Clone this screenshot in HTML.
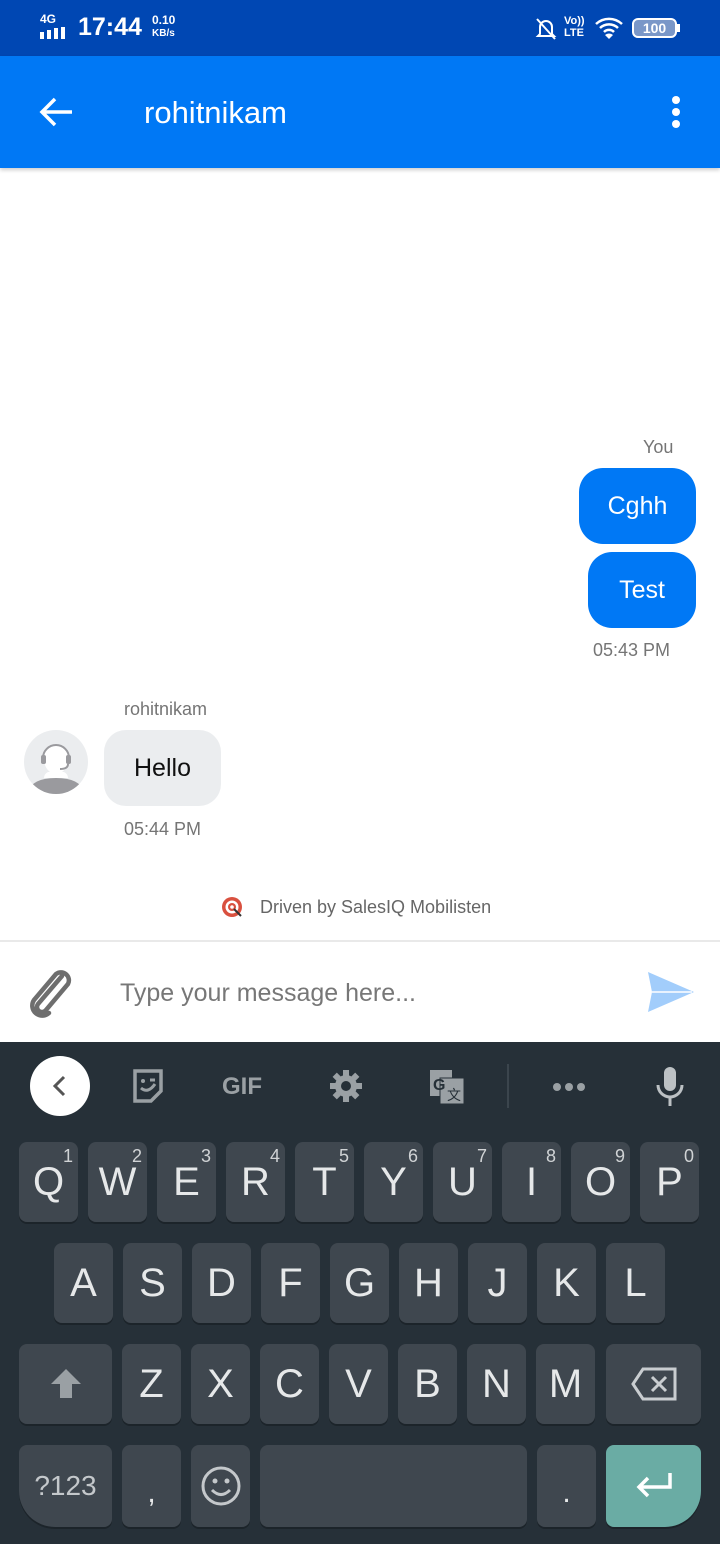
<!DOCTYPE html>
<html><head><meta charset="utf-8"><style>
*{margin:0;padding:0;box-sizing:border-box}
body{width:720px;height:1544px;position:relative;background:#fff;font-family:"Liberation Sans",sans-serif;overflow:hidden}
.abs{position:absolute}
.sb{left:0;top:0;width:720px;height:56px;background:#0047b3;color:#fff}
.hd{left:0;top:56px;width:720px;height:112px;background:#0078f5;color:#fff;box-shadow:0 2px 4px rgba(0,0,0,.2)}
.bub{background:#0078f5;color:#fff;font-size:25px;border-radius:24px;display:flex;align-items:center;justify-content:center}
.gray{color:#757575;font-size:18px}
.kb{left:0;top:1042px;width:720px;height:502px;background:#263038}
.k{position:absolute;width:59px;height:80px;background:#3f474f;border-radius:8px;color:#e6e8e9;font-size:40px;display:flex;align-items:center;justify-content:center;box-shadow:0 2px 0 #1c242a}
.k sup{position:absolute;top:4px;right:5px;font-size:18px;color:#d0d3d5}
</style></head><body>
<div class="abs sb">
 <div class="abs" style="left:40px;top:12px;font-size:12px;font-weight:bold">4G</div>
 <div class="abs" style="left:40px;top:27px;display:flex;gap:3px;align-items:flex-end">
  <div style="width:4px;height:7px;background:#fff"></div><div style="width:4px;height:9px;background:#fff"></div><div style="width:4px;height:11px;background:#fff"></div><div style="width:4px;height:12px;background:#fff"></div></div>
 <div class="abs" style="left:78px;top:13px;font-size:25px;font-weight:bold">17:44</div>
 <div class="abs" style="left:152px;top:14px;font-size:12px;font-weight:bold;line-height:12px">0.10<br><span style="font-size:10px">KB/s</span></div>
 <svg class="abs" style="left:534px;top:16px" width="24" height="26" viewBox="0 0 24 26"><path d="M6 18V11a6 6 0 0 1 12 0v7l2 2H4z" fill="none" stroke="#fff" stroke-width="2"/><path d="M3 3l18 20" stroke="#fff" stroke-width="2"/></svg>
 <div class="abs" style="left:564px;top:15px;font-size:11px;font-weight:bold;line-height:12px">Vo))<br>LTE</div>
 <svg class="abs" style="left:594px;top:16px" width="30" height="24" viewBox="0 0 30 24"><path d="M2 8a19 19 0 0 1 26 0M6 12a13 13 0 0 1 18 0M10 16a7 7 0 0 1 10 0" fill="none" stroke="#fff" stroke-width="2.5"/><path d="M15 23l-4-4a6 6 0 0 1 8 0z" fill="#fff"/></svg>
 <div class="abs" style="left:632px;top:18px;width:45px;height:20px;border:2px solid #fff;border-radius:6px;background:#7a97c8;font-size:14px;font-weight:bold;text-align:center;line-height:16px">100</div>
 <div class="abs" style="left:677px;top:24px;width:3px;height:8px;background:#fff"></div>
</div>
<div class="abs hd">
 <svg class="abs" style="left:38px;top:40px" width="36" height="32" viewBox="0 0 36 32"><path d="M34 16H4M17 3L4 16l13 13" fill="none" stroke="#fff" stroke-width="3.5"/></svg>
 <div class="abs" style="left:144px;top:39px;font-size:31px">rohitnikam</div>
 <div class="abs" style="left:672px;top:40px;width:8px;height:8px;border-radius:50%;background:#fff;box-shadow:0 12px 0 #fff,0 24px 0 #fff"></div>
</div>
<div class="abs gray" style="left:643px;top:437px">You</div>
<div class="abs bub" style="left:579px;top:468px;width:117px;height:76px">Cghh</div>
<div class="abs bub" style="left:588px;top:552px;width:108px;height:76px">Test</div>
<div class="abs gray" style="left:593px;top:640px">05:43 PM</div>
<div class="abs gray" style="left:124px;top:699px">rohitnikam</div>
<svg class="abs" style="left:24px;top:730px" width="64" height="64" viewBox="0 0 64 64"><defs><clipPath id="c"><circle cx="32" cy="32" r="32"/></clipPath></defs><circle cx="32" cy="32" r="32" fill="#ebedef"/><g clip-path="url(#c)"><path d="M4 62q4-14 28-14t28 14v4H4z" fill="#9a9a9e"/><path d="M20 48q0-4 4-6h16q4 2 4 6z" fill="#fff"/><ellipse cx="32" cy="29" rx="12" ry="15" fill="#fff"/><path d="M19 28a13 13 0 0 1 26 0" fill="none" stroke="#9a9a9e" stroke-width="2"/><rect x="17" y="25" width="5" height="9" rx="2" fill="#9a9a9e"/><rect x="42" y="25" width="5" height="9" rx="2" fill="#9a9a9e"/><path d="M44 34q0 5-8 5" fill="none" stroke="#9a9a9e" stroke-width="2"/></g></svg>
<div class="abs" style="left:104px;top:730px;width:117px;height:76px;background:#ebedef;border-radius:22px;font-size:25px;display:flex;align-items:center;justify-content:center;color:#111">Hello</div>
<div class="abs gray" style="left:124px;top:819px">05:44 PM</div>
<svg class="abs" style="left:221px;top:896px" width="24" height="24" viewBox="0 0 24 24"><circle cx="11" cy="11" r="10" fill="#d9503f"/><circle cx="11" cy="11" r="6.5" fill="#fff"/><circle cx="11" cy="11" r="4" fill="#d9503f"/><circle cx="11" cy="11" r="1.8" fill="#fff"/><path d="M13 13l7 7" stroke="#333" stroke-width="2"/></svg>
<div class="abs" style="left:260px;top:897px;font-size:18px;color:#666">Driven by SalesIQ Mobilisten</div>
<div class="abs" style="left:0;top:940px;width:720px;height:2px;background:#e9e9e9"></div>
<svg class="abs" style="left:26px;top:966px" width="50" height="52" viewBox="0 0 50 52"><path d="M36 10L12 38a5 5 0 0 0 8 6l22-26a8 8 0 0 0-12-10L8 34a10 10 0 0 0 15 13" fill="none" stroke="#6e6e6e" stroke-width="4.5" stroke-linecap="round"/></svg>
<div class="abs" style="left:120px;top:979px;font-size:25px;color:#777">Type your message here...</div>
<svg class="abs" style="left:647px;top:972px" width="48" height="40" viewBox="0 0 48 40"><path d="M1 0l46 20L1 40l4-20z" fill="#a2cdfb"/><path d="M5 20h40" stroke="#fff" stroke-width="1.5"/></svg>
<div class="abs kb">
 <div class="abs" style="left:30px;top:14px;width:60px;height:60px;border-radius:50%;background:#fff"></div>
 <svg class="abs" style="left:50px;top:32px" width="20" height="24" viewBox="0 0 20 24"><path d="M14 3L5 12l9 9" fill="none" stroke="#555" stroke-width="3"/></svg>
 <svg class="abs" style="left:130px;top:26px" width="36" height="36" viewBox="0 0 36 36"><path d="M5 3h26v20l-10 10H5z" fill="none" stroke="#9aa0a4" stroke-width="3.5"/><path d="M11 20q7 6 14-4" fill="none" stroke="#9aa0a4" stroke-width="3"/><circle cx="13" cy="13" r="2" fill="#9aa0a4"/><path d="M20 12h5" stroke="#9aa0a4" stroke-width="3"/></svg>
 <div class="abs" style="left:222px;top:31px;font-size:24px;font-weight:bold;color:#9aa0a4">GIF</div>
 <svg class="abs" style="left:328px;top:26px" width="36" height="36" viewBox="0 0 36 36"><circle cx="18" cy="18" r="11" fill="#9aa0a4"/><g stroke="#9aa0a4" stroke-width="6"><path d="M18 2v32M2 18h32M6.7 6.7l22.6 22.6M29.3 6.7L6.7 29.3"/></g><circle cx="18" cy="18" r="5" fill="#263038"/></svg>
 <svg class="abs" style="left:428px;top:26px" width="38" height="38" viewBox="0 0 38 38"><rect x="2" y="2" width="22" height="26" fill="#9aa0a4"/><rect x="12" y="10" width="24" height="26" fill="#9aa0a4" stroke="#263038" stroke-width="1"/><text x="5" y="22" font-size="16" font-weight="bold" fill="#263038" font-family="Liberation Sans">G</text><text x="19" y="32" font-size="14" fill="#263038" font-family="Noto Sans CJK SC, sans-serif">文</text></svg>
 <div class="abs" style="left:507px;top:22px;width:2px;height:44px;background:#3b454d"></div>
 <div class="abs" style="left:553px;top:41px;display:flex;gap:4px"><i style="width:8px;height:8px;border-radius:50%;background:#9aa0a4"></i><i style="width:8px;height:8px;border-radius:50%;background:#9aa0a4"></i><i style="width:8px;height:8px;border-radius:50%;background:#9aa0a4"></i></div>
 <svg class="abs" style="left:654px;top:24px" width="32" height="40" viewBox="0 0 32 40"><rect x="10" y="1" width="12" height="24" rx="6" fill="#bcc1c4"/><path d="M4 19a12 12 0 0 0 24 0M16 31v9" fill="none" stroke="#bcc1c4" stroke-width="3"/></svg>
</div>
<div class="k" style="left:19px;top:1142px">Q<sup>1</sup></div>
<div class="k" style="left:88px;top:1142px">W<sup>2</sup></div>
<div class="k" style="left:157px;top:1142px">E<sup>3</sup></div>
<div class="k" style="left:226px;top:1142px">R<sup>4</sup></div>
<div class="k" style="left:295px;top:1142px">T<sup>5</sup></div>
<div class="k" style="left:364px;top:1142px">Y<sup>6</sup></div>
<div class="k" style="left:433px;top:1142px">U<sup>7</sup></div>
<div class="k" style="left:502px;top:1142px">I<sup>8</sup></div>
<div class="k" style="left:571px;top:1142px">O<sup>9</sup></div>
<div class="k" style="left:640px;top:1142px">P<sup>0</sup></div>
<div class="k" style="left:54px;top:1243px">A</div>
<div class="k" style="left:123px;top:1243px">S</div>
<div class="k" style="left:192px;top:1243px">D</div>
<div class="k" style="left:261px;top:1243px">F</div>
<div class="k" style="left:330px;top:1243px">G</div>
<div class="k" style="left:399px;top:1243px">H</div>
<div class="k" style="left:468px;top:1243px">J</div>
<div class="k" style="left:537px;top:1243px">K</div>
<div class="k" style="left:606px;top:1243px">L</div>
<div class="k" style="left:19px;top:1344px;width:93px"><svg width="34" height="34" viewBox="0 0 34 34"><path d="M17 2L2 17h9v14h12V17h9z" fill="#9aa0a4"/></svg></div>
<div class="k" style="left:122px;top:1344px">Z</div>
<div class="k" style="left:191px;top:1344px">X</div>
<div class="k" style="left:260px;top:1344px">C</div>
<div class="k" style="left:329px;top:1344px">V</div>
<div class="k" style="left:398px;top:1344px">B</div>
<div class="k" style="left:467px;top:1344px">N</div>
<div class="k" style="left:536px;top:1344px">M</div>
<div class="k" style="left:606px;top:1344px;width:95px"><svg width="46" height="34" viewBox="0 0 46 34"><path d="M12 2h32v30H12L2 17z" fill="none" stroke="#c9cdd0" stroke-width="3"/><path d="M21 10l14 14M35 10L21 24" stroke="#c9cdd0" stroke-width="3"/></svg></div>
<div class="k" style="left:19px;top:1445px;width:93px;height:82px;font-size:28px;color:#c4c8cb;border-radius:8px 8px 8px 36px">?123</div>
<div class="k" style="left:122px;top:1445px;height:82px;font-size:30px;padding-top:14px">,</div>
<div class="k" style="left:191px;top:1445px;height:82px"><svg width="42" height="42" viewBox="0 0 42 42"><circle cx="21" cy="21" r="18" fill="none" stroke="#c4c8cb" stroke-width="3"/><circle cx="15" cy="16" r="2.5" fill="#c4c8cb"/><circle cx="27" cy="16" r="2.5" fill="#c4c8cb"/><path d="M12 25q9 9 18 0" fill="none" stroke="#c4c8cb" stroke-width="3"/></svg></div>
<div class="k" style="left:260px;top:1445px;width:267px;height:82px"></div>
<div class="k" style="left:537px;top:1445px;height:82px;font-size:30px;padding-top:14px">.</div>
<div class="k" style="left:606px;top:1445px;width:95px;height:82px;background:#6aaca4;border-radius:8px 8px 36px 8px"><svg width="40" height="30" viewBox="0 0 40 30"><path d="M36 2v14H6M14 7L5 16l9 9" fill="none" stroke="#fff" stroke-width="3.5"/></svg></div>
</body></html>
